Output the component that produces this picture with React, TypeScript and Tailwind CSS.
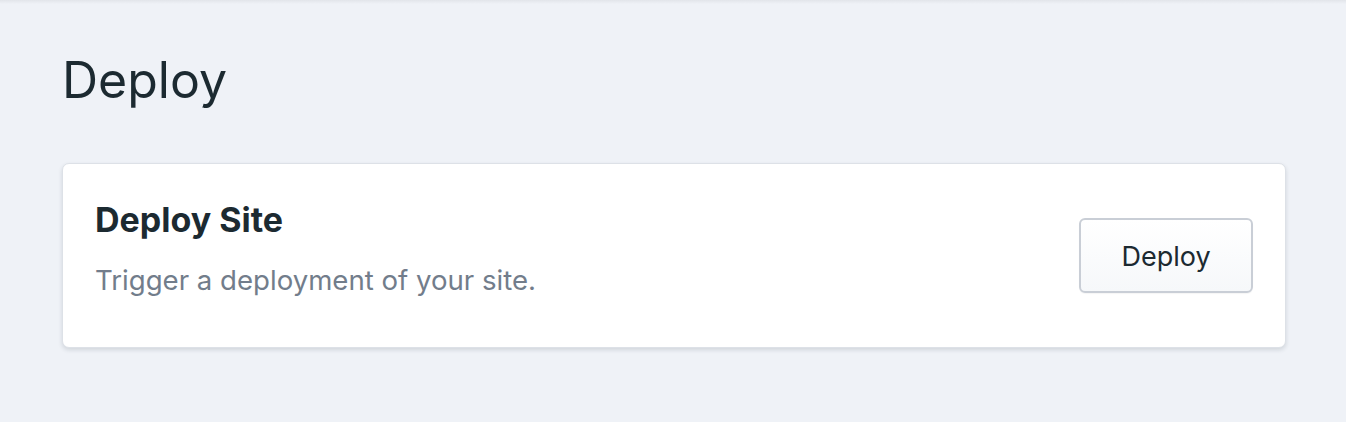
import React from 'react';

const DeployPage: React.FC = () => {
    const handleDeploy = () => {
        console.log('deploy triggered');
    };

    return (
        <div className="min-h-[422px] bg-[#eff2f7] font-['Inter','Noto_Sans',sans-serif] relative">
            <div className="absolute inset-x-0 top-0 h-[4px] bg-gradient-to-b from-[#e2e5ea] to-transparent"></div>
            <main className="pl-[62px] pr-[60px] pt-[52px]">
                <h1 className="text-[50px] leading-[56px] font-normal text-[#1c2a31] mb-[55px]">Deploy</h1>
                <section className="flex items-start justify-between bg-white border border-[#dde1e7] rounded-[7px] shadow-[0_2px_4px_rgba(30,40,60,0.14)] pl-[32px] pr-[32px] pt-[36px] pb-[49px]">
                    <div>
                        <h2 className="text-[34px] leading-[40px] font-bold text-[#1c2a31]">Deploy Site</h2>
                        <p className="mt-[22px] text-[27.6px] leading-[36px] text-[#727d8b]">
                            Trigger a deployment of your site.
                        </p>
                    </div>
                    <button
                        onClick={handleDeploy}
                        className="mt-[18px] w-[174px] h-[75px] pt-[3px] rounded-[6px] border-2 border-[#c9ced6] bg-gradient-to-b from-white to-[#f6f8fa] text-[27px] text-[#1c2a31] shadow-[0_1px_1px_rgba(0,0,0,0.04)]"
                    >
                        Deploy
                    </button>
                </section>
            </main>
        </div>
    );
};

export default function App() {
    return <DeployPage />;
}
